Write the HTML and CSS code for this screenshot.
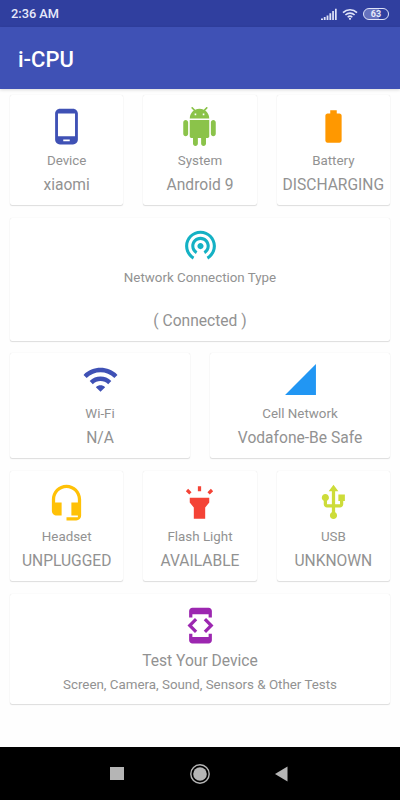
FILE: index.html
```html
<!DOCTYPE html>
<html lang="en">
<head>
<meta charset="UTF-8">
<meta name="viewport" content="width=device-width, initial-scale=1.0">
<title>i-CPU</title>
<link rel="stylesheet" href="styles.css">
</head>
<body>

<div class="statusbar">
    <span class="time">2:36 AM</span>
    <div class="status-icons">
        <svg class="signal" viewBox="0 0 16 12"><path d="M0 10.5h2V12H0zM2.8 9h1.8v3H2.8zM5.6 7.5h1.8V12H5.6zM8.4 5.2h1.8V12H8.4zM11.2 3h1.7v9h-1.7zM14 .8h1.7V12H14z"/></svg>
        <svg class="wifi-small" viewBox="0 0 16 12"><path d="M1 4.6a10 10 0 0 1 14 0M3.4 7a6.6 6.6 0 0 1 9.2 0M5.7 9.2a3.3 3.3 0 0 1 4.6 0"/><circle cx="8" cy="10.8" r="1.1"/></svg>
        <div class="battery">63</div>
    </div>
</div>

<div class="appbar">
    <h1>i-CPU</h1>
</div>

<div class="content">
    <div class="row">
        <div class="card">
            <svg class="icon indigo" viewBox="0 0 24 24"><path d="M16 1H8C6.34 1 5 2.34 5 4v16c0 1.66 1.34 3 3 3h8c1.66 0 3-1.34 3-3V4c0-1.66-1.34-3-3-3zm-2 20h-4v-1h4v1zm3.25-3H6.75V4h10.5v14z"/></svg>
            <p class="label">Device</p>
            <p class="value">xiaomi</p>
        </div>
        <div class="card">
            <svg class="icon green" viewBox="0 0 24 24"><path d="M6 18c0 .55.45 1 1 1h1v3.5c0 .83.67 1.5 1.5 1.5s1.5-.67 1.5-1.5V19h2v3.5c0 .83.67 1.5 1.5 1.5s1.5-.67 1.5-1.5V19h1c.55 0 1-.45 1-1V8H6v10zM3.5 8C2.67 8 2 8.67 2 9.5v7c0 .83.67 1.5 1.5 1.5S5 17.33 5 16.5v-7C5 8.67 4.33 8 3.5 8zm17 0c-.83 0-1.5.67-1.5 1.5v7c0 .83.67 1.5 1.5 1.5s1.5-.67 1.5-1.5v-7c0-.83-.67-1.5-1.5-1.5zm-4.97-5.84l1.3-1.3c.2-.2.2-.51 0-.71-.2-.2-.51-.2-.71 0l-1.48 1.48C13.85 1.23 12.95 1 12 1c-.96 0-1.86.23-2.66.63L7.85.15c-.2-.2-.51-.2-.71 0-.2.2-.2.51 0 .71l1.31 1.31C6.97 3.26 6 5.01 6 7h12c0-1.99-.97-3.75-2.47-4.84zM10 5H9V4h1v1zm5 0h-1V4h1v1z"/></svg>
            <p class="label">System</p>
            <p class="value">Android 9</p>
        </div>
        <div class="card">
            <svg class="icon orange" viewBox="0 0 24 24"><path d="M15.67 4H14V2h-4v2H8.33C7.6 4 7 4.6 7 5.33v15.33C7 21.4 7.6 22 8.33 22h7.33c.74 0 1.34-.6 1.34-1.33V5.33C17 4.6 16.4 4 15.67 4z"/></svg>
            <p class="label">Battery</p>
            <p class="value">DISCHARGING</p>
        </div>
    </div>

    <div class="row network">
        <div class="card">
            <svg class="icon cyan" viewBox="0 0 24 24"><path d="M12 11c-1.1 0-2 .9-2 2s.9 2 2 2 2-.9 2-2-.9-2-2-2zm6 2c0-3.31-2.69-6-6-6s-6 2.69-6 6c0 2.22 1.21 4.15 3 5.19l1-1.74c-1.19-.7-2-1.97-2-3.45 0-2.21 1.79-4 4-4s4 1.79 4 4c0 1.48-.81 2.75-2 3.45l1 1.74c1.79-1.04 3-2.97 3-5.19zM12 3C6.48 3 2 7.48 2 13c0 3.7 2.01 6.92 4.99 8.65l1-1.73C5.61 18.53 4 15.96 4 13c0-4.42 3.58-8 8-8s8 3.58 8 8c0 2.96-1.61 5.53-4 6.92l1 1.73c2.99-1.73 5-4.95 5-8.65 0-5.52-4.48-10-10-10z"/></svg>
            <p class="label">Network Connection Type</p>
            <p class="value">( Connected )</p>
        </div>
    </div>

    <div class="row wireless">
        <div class="card">
            <svg class="icon indigo" viewBox="0 0 24 24"><path d="M1 9l2 2c4.97-4.97 13.03-4.97 18 0l2-2C16.93 2.93 7.08 2.93 1 9zm8 8l3 3 3-3c-1.65-1.66-4.34-1.66-6 0zm-4-4l2 2c2.76-2.76 7.24-2.76 10 0l2-2C15.14 9.14 8.87 9.14 5 13z"/></svg>
            <p class="label">Wi-Fi</p>
            <p class="value">N/A</p>
        </div>
        <div class="card">
            <svg class="icon blue" viewBox="0 0 24 24"><path d="M2 22h20V2z"/></svg>
            <p class="label">Cell Network</p>
            <p class="value">Vodafone-Be Safe</p>
        </div>
    </div>

    <div class="row">
        <div class="card">
            <svg class="icon amber" viewBox="0 0 24 24"><path d="M12 1c-4.97 0-9 4.03-9 9v7c0 1.66 1.34 3 3 3h3v-8H5v-2c0-3.87 3.13-7 7-7s7 3.13 7 7v2h-4v8h4v1h-7v2h6c1.66 0 3-1.34 3-3V10c0-4.97-4.03-9-9-9z"/></svg>
            <p class="label">Headset</p>
            <p class="value">UNPLUGGED</p>
        </div>
        <div class="card">
            <svg class="icon red" viewBox="0 0 24 24"><path d="M6 9h12v3l-2.5 3v7h-7v-7L6 12zM11 2h2v3h-2zM3.6 5L5 3.6l2.1 2.1-1.4 1.4zM20.4 5L19 3.6l-2.1 2.1 1.4 1.4z"/></svg>
            <p class="label">Flash Light</p>
            <p class="value">AVAILABLE</p>
        </div>
        <div class="card">
            <svg class="icon lime" viewBox="0 0 24 24"><path d="M15 7v4h1v2h-3V5h2l-3-4-3 4h2v8H8v-2.07c.7-.37 1.2-1.08 1.2-1.93 0-1.21-.99-2.2-2.2-2.2-1.21 0-2.2.99-2.2 2.2 0 .85.5 1.56 1.2 1.93V13c0 1.11.89 2 2 2h3v3.05c-.71.37-1.2 1.1-1.2 1.95 0 1.22.99 2.2 2.2 2.2 1.21 0 2.2-.98 2.2-2.2 0-.85-.49-1.58-1.2-1.95V15h3c1.11 0 2-.89 2-2v-2h1V7h-4z"/></svg>
            <p class="label">USB</p>
            <p class="value">UNKNOWN</p>
        </div>
    </div>

    <div class="row tests">
        <div class="card">
            <svg class="icon purple" viewBox="0 0 24 24"><path d="M7 5h10v2h2V3c0-1.1-.9-1.99-2-1.99L7 1c-1.1 0-2 .9-2 2v4h2V5zm8.41 11.59L20 12l-4.59-4.59L14 8.83 17.17 12 14 15.17l1.41 1.42zM10 15.17L6.83 12 10 8.83 8.59 7.41 4 12l4.59 4.59L10 15.17zM17 19H7v-2H5v4c0 1.1.9 2 2 2h10c1.1 0 2-.9 2-2v-4h-2v2z"/></svg>
            <p class="value">Test Your Device</p>
            <p class="label">Screen, Camera, Sound, Sensors &amp; Other Tests</p>
        </div>
    </div>
</div>

<div class="navbar">
    <svg viewBox="0 0 20 20"><path d="M3 3h14v13H3z"/></svg>
    <svg viewBox="0 0 20 20"><circle cx="10" cy="10" r="6.8"/><circle class="ring" cx="10" cy="10" r="9.2"/></svg>
    <svg viewBox="0 0 20 20"><path d="M14.5 2.5v15L2 10z"/></svg>
</div>

</body>
</html>
```

FILE: styles.css
```css
* {
    box-sizing: border-box;
}

body {
    margin: 0;
    width: 400px;
    height: 800px;
    display: flex;
    flex-direction: column;
    overflow: hidden;
    background-color: #fefefe;
    font-family: Roboto, sans-serif;
}

h1, p {
    margin: 0;
    font-weight: normal;
}

svg {
    display: block;
    flex: none;
}

.statusbar {
    height: 27px;
    padding: 0 11px;
    display: flex;
    align-items: center;
    justify-content: space-between;
    background-color: #303f9f;
    color: #e6e9fa;
}

.time {
    font-size: 12.8px;
    font-weight: 500;
}

.status-icons {
    display: flex;
    align-items: center;
    gap: 5px;
    fill: #dfe3f8;
}

.signal {
    width: 16px;
    height: 12px;
}

.wifi-small {
    width: 16px;
    height: 12px;
}

.wifi-small path {
    fill: none;
    stroke: #dfe3f8;
    stroke-width: 1.6;
}

.battery {
    width: 26px;
    height: 12px;
    border: 1px solid #dfe3f8;
    border-radius: 6px;
    background: linear-gradient(90deg, #6571bd 63%, #303f9f 63%);
    font-size: 9px;
    font-weight: 700;
    line-height: 10px;
    text-align: center;
}

.appbar {
    height: 62px;
    padding: 2px 18px 0;
    display: flex;
    align-items: center;
    background-color: #3f51b5;
    box-shadow: 0 1px 3px rgba(0, 0, 0, 0.15);
}

.appbar h1 {
    color: #fff;
    font-size: 22px;
    font-weight: 500;
}

.content {
    flex: 1;
    padding: 5.5px 10px 0;
    display: flex;
    flex-direction: column;
    gap: 12.5px;
}

.row {
    display: flex;
    gap: 20px;
}

.card {
    flex: 1 1 0;
    height: 110.5px;
    padding-top: 12px;
    display: flex;
    flex-direction: column;
    align-items: center;
    background-color: #fff;
    border-radius: 2px;
    box-shadow: 0 1px 1px rgba(0, 0, 0, 0.12), 0 0 1px rgba(0, 0, 0, 0.14);
    color: #929292;
    white-space: nowrap;
}

.icon {
    width: 39px;
    height: 39px;
}

.label {
    margin-top: 7px;
    font-size: 13.35px;
    line-height: 16px;
}

.value {
    margin-top: 6px;
    font-size: 15.6px;
    line-height: 20px;
}

.network .card {
    height: 123px;
    padding-top: 8px;
}

.network .value {
    margin-top: 25px;
}

.wireless .card {
    height: 105px;
    padding-top: 8px;
}

.wireless .label {
    margin-top: 7.6px;
}

.network .icon,
.wireless .icon {
    width: 37px;
    height: 37px;
}

.tests .label {
    margin-top: 6px;
}

.indigo { fill: #3f51b5; }
.green { fill: #8bc34a; }
.orange { fill: #ff9800; }
.cyan { fill: #14b1c4; }
.blue { fill: #2196f3; }
.amber { fill: #ffc107; }
.red { fill: #f44336; }
.lime { fill: #cddc39; }
.purple { fill: #9c27b0; }

.navbar {
    height: 53px;
    display: flex;
    align-items: center;
    justify-content: center;
    gap: 63px;
    background-color: #000;
    fill: #b5b5b5;
}

.navbar svg {
    width: 20px;
    height: 20px;
}

.navbar .ring {
    fill: none;
    stroke: #b5b5b5;
    stroke-width: 1.4;
}
```
